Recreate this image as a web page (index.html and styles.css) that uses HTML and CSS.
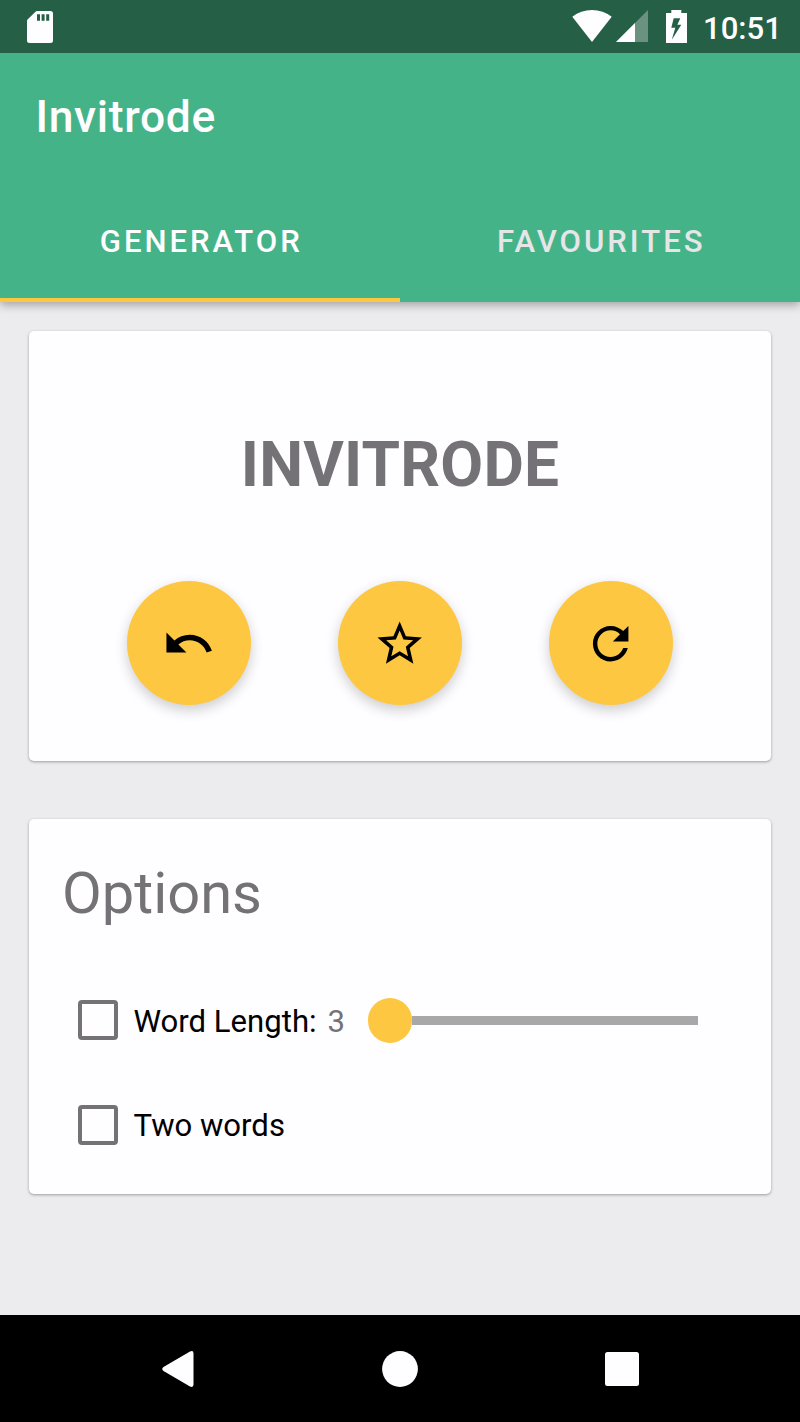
FILE: index.html
```html
<!DOCTYPE html>
<html lang="en">
<head>
<meta charset="utf-8">
<title>Invitrode</title>
<link rel="stylesheet" href="styles.css">
</head>
<body>
<div class="screen">
  <header class="header">
    <div class="status">
      <svg class="sd" width="26" height="32" viewBox="0 0 26 32"><path fill="#fefdff" fill-rule="evenodd" d="M10 0H23.500Q26 0 26 2.500V29.500Q26 32 23.500 32H2.500Q0 32 0 29.500V10Q0 9 .8 8.300L8.500 .7Q9.200 0 10 0ZM10 3.200V9.700H13V3.200ZM14.600 3.200V9.700H17.600V3.200ZM19.200 3.200V9.700H22.200V3.200Z"/></svg>
      <svg class="wifi" width="40" height="32" viewBox="0 0 40 32"><path fill="#fefdff" d="M.3 6.800Q8.800 0 20 0T39.700 6.800L20 32Z"/></svg>
      <svg class="signal" width="32" height="32" viewBox="0 0 32 32"><path fill="#fefdff" fill-opacity=".32" d="M32 0V32H0Z"/><path fill="#fefdff" d="M19 13V32H0Z"/></svg>
      <svg class="battery" width="21" height="33" viewBox="0 0 21 33"><path fill="#fefdff" fill-rule="evenodd" d="M5.300 0H15.300V3H21V33H0V3H5.300ZM7.700 8.300 5.300 17.800H9.300L5.800 29.800 15.300 14.800H11.300L14.300 8.300Z"/></svg>
      <span class="clock">10:51</span>
    </div>
    <h1 class="title">Invitrode</h1>
    <nav class="tabs">
      <a class="tab tab-active">GENERATOR</a>
      <a class="tab">FAVOURITES</a>
    </nav>
  </header>
  <main class="content">
    <section class="card result">
      <div class="word">INVITRODE</div>
      <div class="actions">
        <button class="fab" aria-label="Undo"><svg class="icon" viewBox="0 0 24 24"><path d="M12.500 8c-2.650 0-5.050.99-6.900 2.600L2 7v9h9l-3.620-3.620c1.390-1.160 3.160-1.880 5.120-1.880 3.540 0 6.550 2.310 7.600 5.500l2.370-.78C21.080 11.030 17.150 8 12.500 8z"/></svg></button>
        <button class="fab" aria-label="Favourite"><svg class="icon" viewBox="0 0 24 24"><path d="M22 9.240l-7.190-.62L12 2 9.190 8.630 2 9.240l5.460 4.730L5.820 21 12 17.270 18.180 21l-1.630-7.030L22 9.240zM12 15.400l-3.760 2.270 1-4.280-3.320-2.880 4.380-.38L12 6.100l1.710 4.040 4.380.38-3.320 2.880 1 4.280L12 15.400z"/></svg></button>
        <button class="fab" aria-label="Refresh"><svg class="icon" viewBox="0 0 24 24"><path d="M17.650 6.350C16.200 4.900 14.210 4 12 4c-4.420 0-7.990 3.580-7.990 8s3.570 8 7.990 8c3.730 0 6.840-2.550 7.730-6h-2.080c-.82 2.330-3.040 4-5.650 4-3.310 0-6-2.690-6-6s2.690-6 6-6c1.660 0 3.140.69 4.220 1.780L13 11h7V4l-2.350 2.350z"/></svg></button>
      </div>
    </section>
    <section class="card options">
      <h2 class="heading">Options</h2>
      <div class="row">
        <span class="checkbox"></span>
        <span class="label">Word Length:</span>
        <span class="value">3</span>
        <span class="slider"><span class="thumb"></span><span class="track"></span></span>
      </div>
      <div class="row">
        <span class="checkbox"></span>
        <span class="label">Two words</span>
      </div>
    </section>
  </main>
  <footer class="navbar">
    <svg class="back" width="32" height="36" viewBox="0 0 32 36"><path fill="#fefdff" d="M28 .5Q31.500-1 31.500 2.500V33.500Q31.500 37 28 35.500L1.500 20Q-1 18 1.500 16Z"/></svg>
    <svg class="home" width="36" height="36" viewBox="0 0 36 36"><circle fill="#fefdff" cx="18" cy="18" r="17.900"/></svg>
    <svg class="recent" width="34" height="34" viewBox="0 0 34 34"><rect fill="#fefdff" width="34" height="34" rx="2.500"/></svg>
  </footer>
</div>
</body>
</html>
```

FILE: styles.css
```css
* { box-sizing: border-box; }
body { margin: 0; font-family: Roboto, sans-serif; }
.screen {
  width: 800px;
  height: 1422px;
  display: flex;
  flex-direction: column;
  background: #ecebed;
  overflow: hidden;
}
.header {
  height: 302px;
  flex: none;
  background: #45b388;
  box-shadow: 0 3px 9px rgba(0, 0, 0, .32);
}
.status {
  height: 53px;
  display: flex;
  align-items: flex-start;
  padding: 11px 20px 0 27px;
  background: #255f46;
}
.wifi { margin-left: auto; margin-top: -1px; }
.signal { margin-left: 4px; margin-top: -1px; }
.battery { margin-left: 18px; margin-top: -1px; }
.clock {
  width: 77px;
  margin-left: 16px;
  font-size: 31.1px;
  font-weight: 500;
  line-height: 36px;
  white-space: nowrap;
  color: #fefdff;
}
.title {
  height: 128px;
  margin: 0;
  padding-left: 35.500px;
  font-size: 44.4px;
  font-weight: 500;
  letter-spacing: .65px;
  line-height: 129px;
  color: #fefdff;
}
.tabs { display: flex; height: 121px; }
.tab {
  width: 400px;
  padding-left: 2.500px;
  text-align: center;
  font-size: 31.1px;
  font-weight: 500;
  letter-spacing: 2.98px;
  line-height: 121px;
  color: #e6e6e8;
}
.tab-active { color: #fefdff; border-bottom: 4px solid #fdc741; }
.content { flex: 1; padding: 29px; }
.card {
  border-radius: 5px;
  background: #fefdff;
  box-shadow: 0 1px 3px rgba(0, 0, 0, .34);
}
.result { height: 429.500px; padding-top: 94px; }
.word {
  text-align: center;
  font-size: 62.2px;
  font-weight: 700;
  letter-spacing: .2px;
  line-height: 80px;
  color: #747276;
}
.actions { display: flex; justify-content: center; gap: 86.700px; margin-top: 75.800px; }
.fab {
  width: 124.4px;
  height: 124.4px;
  padding: 1px 0 0;
  border: 0;
  border-radius: 50%;
  display: flex;
  align-items: center;
  justify-content: center;
  background: #fdc741;
  box-shadow: 0 5px 13px rgba(0, 0, 0, .2);
}
.icon { width: 53.3px; height: 53.3px; }
.options { height: 375px; margin-top: 58.500px; padding: 34px 49px 0; }
.heading {
  margin: 0 0 0 -16px;
  font-size: 57.8px;
  font-weight: 400;
  line-height: 80px;
  color: #747276;
}
.row {
  display: flex;
  align-items: center;
  height: 104.500px;
  font-size: 31.1px;
  line-height: 40px;
}
.heading + .row { margin-top: 35.200px; }
.checkbox { width: 40px; height: 40px; border: 4px solid #747276; border-radius: 4px; }
.label { margin-left: 15.500px; padding-top: 3px; color: #000; }
.value { width: 18px; margin-left: 11px; padding-top: 3px; color: #747276; }
.slider { display: flex; align-items: center; margin-left: auto; width: 330.500px; margin-right: 24px; }
.thumb { width: 44.4px; height: 44.4px; border-radius: 50%; background: #fdc741; }
.track { flex: 1; height: 9px; background: #a8a8a8; }
.navbar {
  height: 107px;
  flex: none;
  display: flex;
  align-items: center;
  padding: 0 161px 0 162px;
  justify-content: space-between;
  background: #000;
}
```
